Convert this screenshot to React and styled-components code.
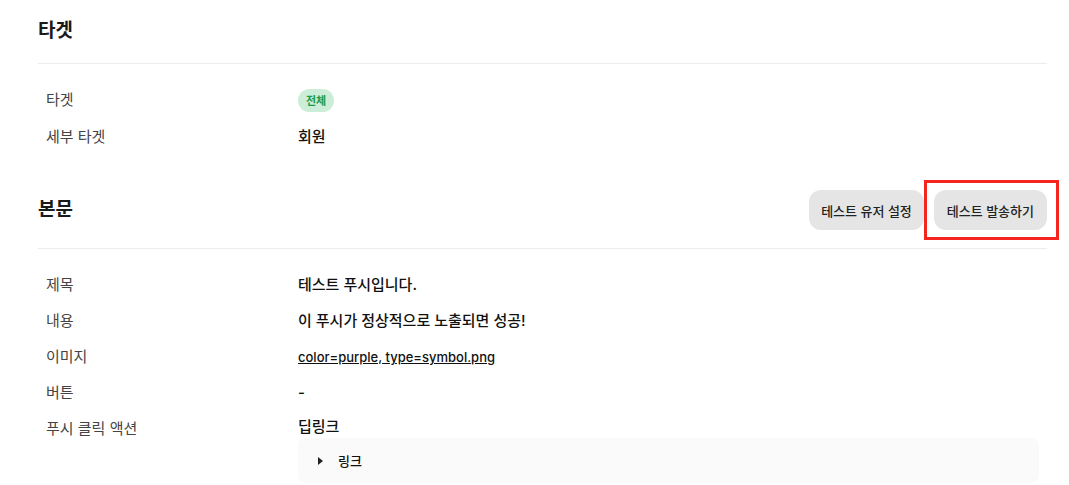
import React from 'react'
import styled, { createGlobalStyle } from 'styled-components'

const GlobalStyle = createGlobalStyle`
  body {
    margin: 0;
    background: #fff;
    font-family: Inter, "Noto Sans CJK KR", sans-serif;
    color: #111;
  }
`

const Page = styled.div`
  margin-top: 0;
  padding: 0 22px 0 38px;
`

const Section = styled.section`
  display: flex;
  flex-direction: column;
`

const Header = styled.div`
  display: flex;
  align-items: center;
  justify-content: space-between;
  min-height: 28px;
  padding: ${p => (p.$first ? '17px 0 18px' : '18px 0')};
  border-bottom: 1px solid #ececec;
`

const Title = styled.h2`
  margin: 0;
  font-size: 19px;
  line-height: 28px;
  font-weight: 700;
  color: #1a1a1a;
`

const Actions = styled.div`
  display: flex;
  gap: 10px;
`

const ActionButton = styled.button`
  position: relative;
  height: 40px;
  padding: 0 ${p => (p.$highlight ? 13 : 12)}px;
  border: none;
  border-radius: 12px;
  background: #e5e5e5;
  font-family: inherit;
  font-size: 13px;
  font-weight: 500;
  color: #222;

  /* red annotation frame drawn over the button */
  &::after {
    content: '';
    display: ${p => (p.$highlight ? 'block' : 'none')};
    position: absolute;
    top: -10px;
    bottom: -10px;
    left: -10px;
    right: -12px;
    border: 3px solid #f4251f;
    pointer-events: none;
  }
`

const List = styled.div`
  display: flex;
  flex-direction: column;
  padding: 18px 8px 17px;
`

const Row = styled.div`
  display: grid;
  grid-template-columns: 252px 1fr;
  align-items: start;
`

const Label = styled.div`
  line-height: 22px;
  padding: 7px 0;
  font-size: 15px;
  color: #444;
`

const Value = styled.div`
  display: flex;
  flex-direction: column;
  align-items: flex-start;
  justify-content: center;
  padding: ${p => (p.$tight ? '5px 0 0' : '7px 0')};
  min-height: 22px;
  font-size: 15px;
  font-weight: 500;
  line-height: 22px;
  color: #111;
`

const Badge = styled.span`
  display: inline-flex;
  align-items: center;
  height: 23px;
  padding: 0 8px;
  border-radius: 12px;
  background: #ccedd7;
  color: #1a9b4b;
  font-size: 11px;
  font-weight: 700;
`

const FileLink = styled.a`
  font-size: 13px;
  font-weight: 500;
  color: #111;
  text-decoration: underline;
`

const Details = styled.div`
  align-self: stretch;
  display: flex;
  align-items: center;
  gap: 15px;
  height: 45px;
  padding: 0 20px;
  border-radius: 8px;
  background: #fafafa;
  font-size: 13px;
  font-weight: 500;
`

const Caret = styled.span`
  width: 0;
  height: 0;
  border-top: 4px solid transparent;
  border-bottom: 4px solid transparent;
  border-left: 5px solid #222;
`

const targetRows = [
  { label: '타겟', value: <Badge>전체</Badge> },
  { label: '세부 타겟', value: '회원' },
]

export default function App() {
  return (
    <>
      <GlobalStyle />
      <Page>
        <Section>
          <Header $first>
            <Title>타겟</Title>
          </Header>
          <List>
            {targetRows.map(r => (
              <Row key={r.label}>
                <Label>{r.label}</Label>
                <Value>{r.value}</Value>
              </Row>
            ))}
          </List>
        </Section>

        <Section>
          <Header>
            <Title>본문</Title>
            <Actions>
              <ActionButton>테스트 유저 설정</ActionButton>
              <ActionButton $highlight>테스트 발송하기</ActionButton>
            </Actions>
          </Header>
          <List>
            <Row>
              <Label>제목</Label>
              <Value>테스트 푸시입니다.</Value>
            </Row>
            <Row>
              <Label>내용</Label>
              <Value>이 푸시가 정상적으로 노출되면 성공!</Value>
            </Row>
            <Row>
              <Label>이미지</Label>
              <Value>
                <FileLink href="#">color=purple, type=symbol.png</FileLink>
              </Value>
            </Row>
            <Row>
              <Label>버튼</Label>
              <Value>-</Value>
            </Row>
            <Row>
              <Label>푸시 클릭 액션</Label>
              <Value $tight>
                딥링크
                <Details>
                  <Caret />
                  링크
                </Details>
              </Value>
            </Row>
          </List>
        </Section>
      </Page>
    </>
  )
}
